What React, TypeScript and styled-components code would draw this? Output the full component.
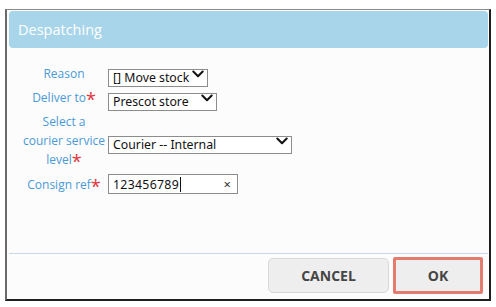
import styled, { createGlobalStyle } from "styled-components";

const GlobalStyle = createGlobalStyle`
  html, body {
    margin: 0;
    padding: 0;
    background: #ffffff;
  }
  body {
    font-family: "Open Sans", "Noto Sans", Arial, sans-serif;
  }
`;

interface Option {
  label: string;
}

const Chevron = () => (
  <svg width="12" height="8" viewBox="0 0 12 8">
    <path
      d="M1.3 1.5 L6 6.3 L10.7 1.5"
      fill="none"
      stroke="#111"
      strokeWidth="2"
      strokeLinecap="round"
      strokeLinejoin="round"
    />
  </svg>
);

const Dropdown = ({ width, options }: { width: number; options: Option[] }) => (
  <SelectWrap $width={width}>
    <Select defaultValue={options[0].label}>
      {options.map((o) => (
        <option key={o.label}>{o.label}</option>
      ))}
    </Select>
    <Arrow>
      <Chevron />
    </Arrow>
  </SelectWrap>
);

const App = () => {
  return (
    <>
      <GlobalStyle />
      <Frame>
        <Header>Despatching</Header>
        <Body>
          <Form>
            <Label>Reason</Label>
            <Control>
              <Dropdown width={100} options={[{ label: "[] Move stock" }]} />
            </Control>

            <Label>
              Deliver to<Star>*</Star>
            </Label>
            <Control>
              <Dropdown width={109} options={[{ label: "Prescot store" }]} />
            </Control>

            <Label>
              Select a
              <br />
              courier service
              <br />
              level<Star>*</Star>
            </Label>
            <Control>
              <Dropdown width={184} options={[{ label: "Courier -- Internal" }]} />
            </Control>

            <Label>
              Consign ref<Star>*</Star>
            </Label>
            <Control>
              <TextBox>
                <Value>123456789</Value>
                <Caret />
                <Clear>×</Clear>
              </TextBox>
            </Control>
          </Form>
        </Body>
        <Footer>
          <Button>CANCEL</Button>
          <Button $primary>OK</Button>
        </Footer>
      </Frame>
    </>
  );
};

export default App;

const Frame = styled.div`
  display: flex;
  flex-direction: column;
  box-sizing: border-box;
  width: 486px;
  height: 292px;
  margin: 9px 0 0 5px;
  background: #fcfcfc;
  border-top: 1px solid #8a8a8a;
  border-left: 2px solid #6a6a6a;
  border-right: 2px solid #1e1e1e;
  border-bottom: 2px solid #1e1e1e;
`;
const Header = styled.div`
  display: flex;
  align-items: center;
  height: 37px;
  margin: 1px 1px 0 2px;
  padding-left: 9px;
  border-radius: 4px;
  background: #a8d5ea;
  color: #ffffff;
  font-size: 14.5px;
`;
const Body = styled.div`
  flex: 1;
  padding: 16px 0 0 13px;
`;
const Form = styled.div`
  display: grid;
  grid-template-columns: 88px auto;
  column-gap: 0;
  row-gap: 5px;
  align-items: center;
`;
const Label = styled.div`
  text-align: center;
  white-space: nowrap;
  color: #4a9ad8;
  font-size: 12px;
  line-height: 19px;
`;
const Star = styled.span`
  color: #e2333b;
  font-size: 18px;
  line-height: 0;
  vertical-align: -4px;
`;
const Control = styled.div`
  display: flex;
  align-items: center;
`;
const SelectWrap = styled.div<{ $width: number }>`
  position: relative;
  width: ${(p) => p.$width}px;
  height: 18px;
`;
const Select = styled.select`
  appearance: none;
  box-sizing: border-box;
  width: 100%;
  height: 100%;
  margin: 0;
  padding: 0 16px 0 4px;
  border: 1px solid #8c8c8c;
  border-radius: 0;
  background: #ffffff;
  color: #111;
  font-family: "Noto Sans", "Open Sans", sans-serif;
  font-size: 12.3px;
  line-height: 16px;
`;
const Arrow = styled.span`
  position: absolute;
  right: 4px;
  top: 5px;
  display: flex;
  pointer-events: none;
`;
const TextBox = styled.div`
  display: flex;
  align-items: center;
  box-sizing: border-box;
  width: 130px;
  height: 20px;
  padding: 0 6px 0 4px;
  border: 1px solid #8c8c8c;
  background: #ffffff;
  font-family: "Noto Sans", "Open Sans", sans-serif;
  font-size: 12.3px;
  color: #111;
`;
const Value = styled.span`
  letter-spacing: 0.3px;
`;
const Caret = styled.span`
  width: 1px;
  height: 15px;
  margin-left: 1px;
  background: #111;
`;
const Clear = styled.span`
  margin-left: auto;
  font-size: 13px;
  color: #333;
`;
const Footer = styled.div`
  display: flex;
  justify-content: flex-end;
  align-items: flex-start;
  gap: 4px;
  height: 46px;
  box-sizing: border-box;
  padding: 3px 5px 0 0;
  margin: 0 1px 0 2px;
  border-top: 1px solid #c8d8e8;
`;
const Button = styled.button<{ $primary?: boolean }>`
  box-sizing: border-box;
  width: ${(p) => (p.$primary ? "90px" : "121px")};
  height: ${(p) => (p.$primary ? "37px" : "35px")};
  margin-top: ${(p) => (p.$primary ? "0" : "1px")};
  border: ${(p) => (p.$primary ? "3px solid #e47b6f" : "1px solid #d8d8d8")};
  border-radius: ${(p) => (p.$primary ? "2px" : "5px")};
  background: #eeeeee;
  color: #454545;
  font-family: "Open Sans", sans-serif;
  font-size: 14px;
  font-weight: 700;
  cursor: pointer;
`;
